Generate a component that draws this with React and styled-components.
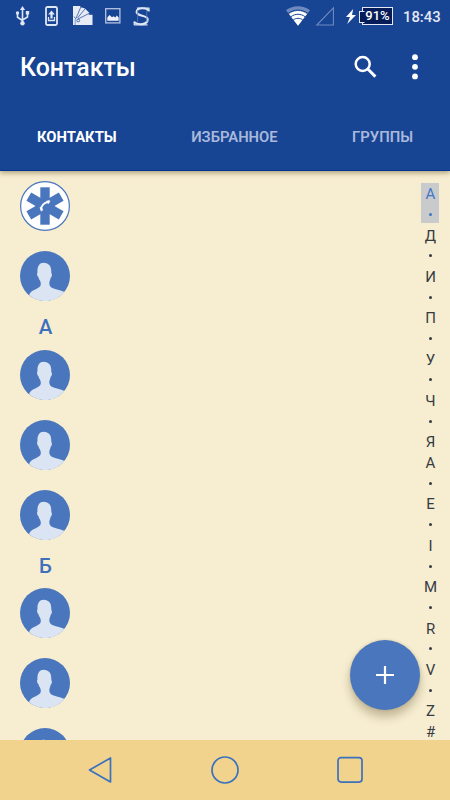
import React from 'react';
import styled, {createGlobalStyle} from 'styled-components';

const GlobalStyle = createGlobalStyle`
  * {
    box-sizing: border-box;
  }
  body {
    margin: 0;
    font-family: Roboto, 'Liberation Sans', sans-serif;
    background-color: #f7edd0;
  }
  svg {
    display: block;
    flex: none;
  }
`;

const Screen = styled.div`
  width: 450px;
  height: 800px;
  display: flex;
  flex-direction: column;
  overflow: hidden;
  position: relative;
  background-color: #f7edd0;
`;

const Header = styled.header`
  flex: none;
  height: 171px;
  background-color: #184494;
  border-bottom: 1px solid #043294;
  box-shadow: 0 2px 5px rgba(70, 55, 10, 0.42);
  color: #fff;
  position: relative;
`;

const StatusBar = styled.div`
  height: 32px;
  display: flex;
  align-items: center;
  justify-content: space-between;
  padding: 0 10px 0 14px;
`;

const StatusGroup = styled.div`
  display: flex;
  align-items: center;
  gap: ${({$gap}) => $gap || 0}px;
`;

const Battery = styled.div`
  width: 31px;
  height: 18px;
  margin-left: 6px;
  border: 1px solid #e4e9f5;
  background-color: #061c58;
  font-size: 13px;
  font-weight: 500;
  line-height: 16px;
  text-align: center;
  position: relative;

  &::before {
    content: '';
    position: absolute;
    left: -4px;
    top: 3px;
    width: 4px;
    height: 10px;
    border: 1px solid #e4e9f5;
    border-right-color: #061c58;
    background-color: #061c58;
  }
`;

const Clock = styled.span`
  margin-left: 10px;
  width: 37px;
  padding-top: 1px;
  font-size: 14.8px;
  line-height: 32px;
  color: #e4e9f5;
  font-weight: 500;
  white-space: nowrap;
`;

const Toolbar = styled.div`
  height: 70px;
  display: flex;
  align-items: center;
  padding: 0 31px 0 20px;
`;

const Title = styled.h1`
  flex: 1;
  margin: 0;
  padding-top: 1px;
  font-size: 24.9px;
  line-height: 30px;
  font-weight: 500;
`;

const ToolButton = styled.button`
  display: flex;
  padding: 0 0 1px;
  border: 0;
  background: none;
  color: #fff;
  margin-left: ${({$space}) => $space || 0}px;
`;

const Tabs = styled.nav`
  height: 69px;
  display: flex;
  justify-content: space-between;
  align-items: center;
  padding: 0 37px;
`;

const Tab = styled.span`
  font-size: 14.8px;
  font-weight: ${({$active}) => ($active ? 700 : 600)};
  line-height: 20px;
  color: ${({$active}) => ($active ? '#fff' : '#a9b9dc')};
`;

const Content = styled.main`
  flex: 1;
  min-height: 0;
  display: flex;
  justify-content: space-between;
  overflow: hidden;
`;

const List = styled.div`
  width: 90px;
`;

const Row = styled.div`
  height: 70px;
  padding: 10px 20px;
`;

const Letter = styled.div`
  height: 28.5px;
  padding-left: 1px;
  line-height: 32px;
  font-size: 20.5px;
  font-weight: 500;
  text-align: center;
  color: #3d70bd;
`;

const IndexBar = styled.div`
  width: 18px;
  margin: 12px 11px 0 0;
`;

const IndexGroup = styled.div`
  background-color: ${({$active}) => ($active ? '#c9cacc' : 'transparent')};
  color: ${({$active}) => ($active ? '#4176c4' : '#353b44')};
  height: ${({$active}) => ($active ? '40px' : 'auto')};
  margin-bottom: ${({$active}) => ($active ? '1.2px' : 0)};
`;

const IndexItem = styled.div`
  height: 20.69px;
  display: flex;
  align-items: center;
  justify-content: center;
  padding: 2px 0 0 1px;
  font-size: 15px;
  line-height: 20px;
`;

const Dot = styled.i`
  width: 3px;
  height: 3px;
  margin-bottom: 1px;
  border-radius: 50%;
  background-color: currentColor;
`;

const AddButton = styled.button`
  position: absolute;
  left: 350px;
  top: 640px;
  width: 70px;
  height: 70px;
  display: flex;
  align-items: center;
  justify-content: center;
  padding: 0;
  border: 0;
  border-radius: 50%;
  background-color: #4a76bd;
  box-shadow: 0 7px 10px rgba(80, 70, 30, 0.32), 0 0 3px rgba(80, 70, 30, 0.2);
`;

const NavBar = styled.footer`
  flex: none;
  height: 60px;
  display: flex;
  align-items: center;
  justify-content: space-between;
  padding: 0 85px;
  background-color: #f1d38e;
`;

const UsbIcon = () => (
  <svg width="16" height="20" viewBox="0 0 16 20" fill="none" stroke="#dfe6f4" strokeWidth="1.6">
    <path d="M8.5 3v14M3.5 8v3.2l5 3.3M13.5 8v3l-5 3" />
    <path d="M8.5 0l2.6 4H5.9z" fill="#dfe6f4" stroke="none" />
    <circle cx="3.5" cy="7" r="1.7" fill="#dfe6f4" stroke="none" />
    <path d="M11.8 5h3.4v3.4h-3.4z" fill="#dfe6f4" stroke="none" />
    <circle cx="8.5" cy="17.3" r="2.2" fill="#dfe6f4" stroke="none" />
  </svg>
);

const PhoneUploadIcon = () => (
  <svg width="13" height="20" viewBox="0 0 13 20">
    <rect x="1" y="1" width="11" height="18" rx="1.5" fill="none" stroke="#dfe6f4" strokeWidth="1.8" />
    <path d="M6.5 4.5l3.4 4H7.6v4H5.4v-4H3.1z" fill="#dfe6f4" />
    <path d="M3.5 11v3.5h6V11" fill="none" stroke="#dfe6f4" strokeWidth="1.3" />
  </svg>
);

const PaletteIcon = () => (
  <svg width="20" height="20" viewBox="0 0 20 20">
    <path d="M0 0h7l.8 1.2 4.2 1.3 4.5 4.6L15.5 8.8h4V19H0z" fill="#e6ebf6" />
    <path d="M7.8 1L3.2 12M12.3 2.6L4.5 12M16.5 7.2L5 13M1 10.5L3 13" fill="none" stroke="#184494" strokeWidth="0.7" />
    <circle cx="5.2" cy="14.5" r="1.4" fill="none" stroke="#184494" strokeWidth="0.7" />
    <path d="M2.2 13v6" stroke="#184494" strokeWidth="0.5" />
  </svg>
);

const ImageIcon = () => (
  <svg width="16" height="16" viewBox="0 0 16 16">
    <rect x="0.7" y="0.7" width="14.2" height="14.2" fill="none" stroke="#b5c3e0" strokeWidth="1.3" />
    <path d="M2.3 12.8V9.5l2.2-2.5L7 9.3l1.6-1 1.8 1.2L11.8 7.5l1.9 2v3.3z" fill="#eef1f9" />
  </svg>
);

const ScriptIcon = () => (
  <svg width="18" height="19" viewBox="0 0 18 19" fill="none" stroke="#dfe6f4">
    <path d="M15.5 4.2C15 .8 4.2-.3 3.6 4.8 3.3 9.8 15 7.8 14.7 12.6c-.4 5.2-9.4 6-13.7 2.4" strokeWidth="2.1" />
    <path d="M4 1.2h12.5M1 17.8h13.5M16 1v3.5M1.2 14.5V18" strokeWidth="1.2" />
    <path d="M4.6 3v12M13.8 3v12" stroke="#5f7eb8" strokeWidth="0.8" />
  </svg>
);

const WifiIcon = () => (
  <svg width="24" height="20" viewBox="0 0 24 20">
    <path d="M0 4.2C7-1 17-1 24 4.2L12 19.7z" fill="#6e8abf" />
    <path d="M3 8.1C8.5 4.1 15.5 4.1 21 8.1L12 19.7z" fill="#fff" />
    <path d="M2.2 7.4c5.8-4.4 13.8-4.4 19.6 0M4.8 10.8c4.4-3.4 10-3.4 14.4 0M7.2 14c2.7-2.2 6.9-2.2 9.6 0" fill="none" stroke="#184494" strokeWidth="1" />
  </svg>
);

const SignalIcon = () => (
  <svg width="20" height="20" viewBox="0 0 20 20">
    <path d="M1.8 19H18.4V1.8z" fill="none" stroke="#6e8abf" strokeWidth="1.1" />
  </svg>
);

const BoltIcon = () => (
  <svg width="10" height="15" viewBox="0 0 10 15">
    <path d="M7.2 0L0 8h4L1.2 15 10 6H6z" fill="#fff" />
  </svg>
);

const SearchIcon = () => (
  <svg width="24" height="24" viewBox="0 0 24 24" fill="none" stroke="#fff">
    <circle cx="8.7" cy="9" r="7" strokeWidth="2.5" />
    <path d="M13.8 14l7.6 7.6" strokeWidth="2.9" />
  </svg>
);

const MoreIcon = () => (
  <svg width="8" height="26" viewBox="0 0 8 26" fill="#fff">
    <circle cx="4" cy="3.2" r="2.9" />
    <circle cx="4" cy="12.8" r="2.9" />
    <circle cx="4" cy="22.4" r="2.9" />
  </svg>
);

const Avatar = () => (
  <svg width="50" height="50" viewBox="0 0 50 50">
    <circle cx="25" cy="25" r="25" fill="#4a76bd" />
    <path
      d="M23.5 11.8c4.5 0 7.6 2.8 7.7 7.4l.2 3c1 1 .5 3.6-.7 4.6-.4 2-1 3-1.2 4-.4 2.3 0 4.6 1.8 5.6 3.5 1.8 9.5 2.4 13.2 4.6A25 25 0 0 1 9.3 44.4C9 40 17 38.5 20 35.5c1.3-1.6.8-4.2 0-6-.8-1-1.3-2-1.6-3.5-1.3-.8-1.8-3.5-.9-4.4-.5-6 1.8-9.8 6-9.8z"
      fill="#dae4f3"
    />
  </svg>
);

const EmergencyIcon = () => (
  <svg width="50" height="50" viewBox="0 0 50 50">
    <circle cx="25" cy="25" r="24.4" fill="#fff" stroke="#4a76bd" strokeWidth="1.2" />
    <g fill="#4a76bd">
      <rect x="20.3" y="6.3" width="9.4" height="37.4" />
      <rect x="20.3" y="6.3" width="9.4" height="37.4" transform="rotate(60 25 25)" />
      <rect x="20.3" y="6.3" width="9.4" height="37.4" transform="rotate(-60 25 25)" />
    </g>
    <path d="M21 28.2c.2-3.4 3-6.6 6.8-7" fill="none" stroke="#fff" strokeWidth="1.8" />
    <path d="M20 26.2l1.8.3 1 2.6-1.8 1zM26.3 20.2l3-.8.6 1.2-1.7 2.2z" fill="#fff" stroke="#fff" strokeWidth="0.6" strokeLinejoin="round" />
  </svg>
);

const contacts = [
  {letter: null, count: 1},
  {letter: 'А', count: 3},
  {letter: 'Б', count: 3},
];

const index = ['А•', 'Д•', 'И•', 'П•', 'У•', 'Ч•', 'Я', 'A•', 'E•', 'I•', 'M•', 'R•', 'V•', 'Z', '#'];

const App = () => (
  <>
    <GlobalStyle />
    <Screen>
      <Header>
        <StatusBar>
          <StatusGroup $gap={12}>
            <StatusGroup $gap={15}>
              <UsbIcon />
              <PhoneUploadIcon />
              <PaletteIcon />
            </StatusGroup>
            <ImageIcon />
            <ScriptIcon />
          </StatusGroup>
          <StatusGroup>
            <StatusGroup $gap={5}>
              <WifiIcon />
              <SignalIcon />
            </StatusGroup>
            <StatusGroup $gap={11}>
              <span />
              <BoltIcon />
            </StatusGroup>
            <Battery>91%</Battery>
            <Clock>18:43</Clock>
          </StatusGroup>
        </StatusBar>
        <Toolbar>
          <Title>Контакты</Title>
          <ToolButton><SearchIcon /></ToolButton>
          <ToolButton $space={33}><MoreIcon /></ToolButton>
        </Toolbar>
        <Tabs>
          <Tab $active>КОНТАКТЫ</Tab>
          <Tab>ИЗБРАННОЕ</Tab>
          <Tab>ГРУППЫ</Tab>
        </Tabs>
      </Header>
      <Content>
        <List>
          <Row><EmergencyIcon /></Row>
          {contacts.map(({letter, count}) => (
            <React.Fragment key={letter || 'me'}>
              {letter && <Letter>{letter}</Letter>}
              {Array.from({length: count}, (_, i) => (
                <Row key={i}><Avatar /></Row>
              ))}
            </React.Fragment>
          ))}
        </List>
        <IndexBar>
          {index.map((group, i) => (
            <IndexGroup key={group} $active={i === 0}>
              {group.split('').map((char) => (
                <IndexItem key={char}>{char === '•' ? <Dot /> : char}</IndexItem>
              ))}
            </IndexGroup>
          ))}
        </IndexBar>
      </Content>
      <NavBar>
        <svg width="30" height="30" viewBox="0 0 30 30" fill="none" stroke="#3a72bd" strokeWidth="1.7" strokeLinejoin="round">
          <path d="M4.5 15L25.5 3v24z" />
        </svg>
        <svg width="30" height="30" viewBox="0 0 30 30" fill="none" stroke="#3a72bd" strokeWidth="1.7">
          <circle cx="15" cy="15" r="13" />
        </svg>
        <svg width="30" height="30" viewBox="0 0 30 30" fill="none" stroke="#3a72bd" strokeWidth="1.7">
          <rect x="3" y="2.7" width="24" height="24.4" rx="3" />
        </svg>
      </NavBar>
      <AddButton>
        <svg width="18" height="18" viewBox="0 0 18 18" stroke="#fff" strokeWidth="2.2">
          <path d="M9 0v18M0 9h18" />
        </svg>
      </AddButton>
    </Screen>
  </>
);

export default App;
